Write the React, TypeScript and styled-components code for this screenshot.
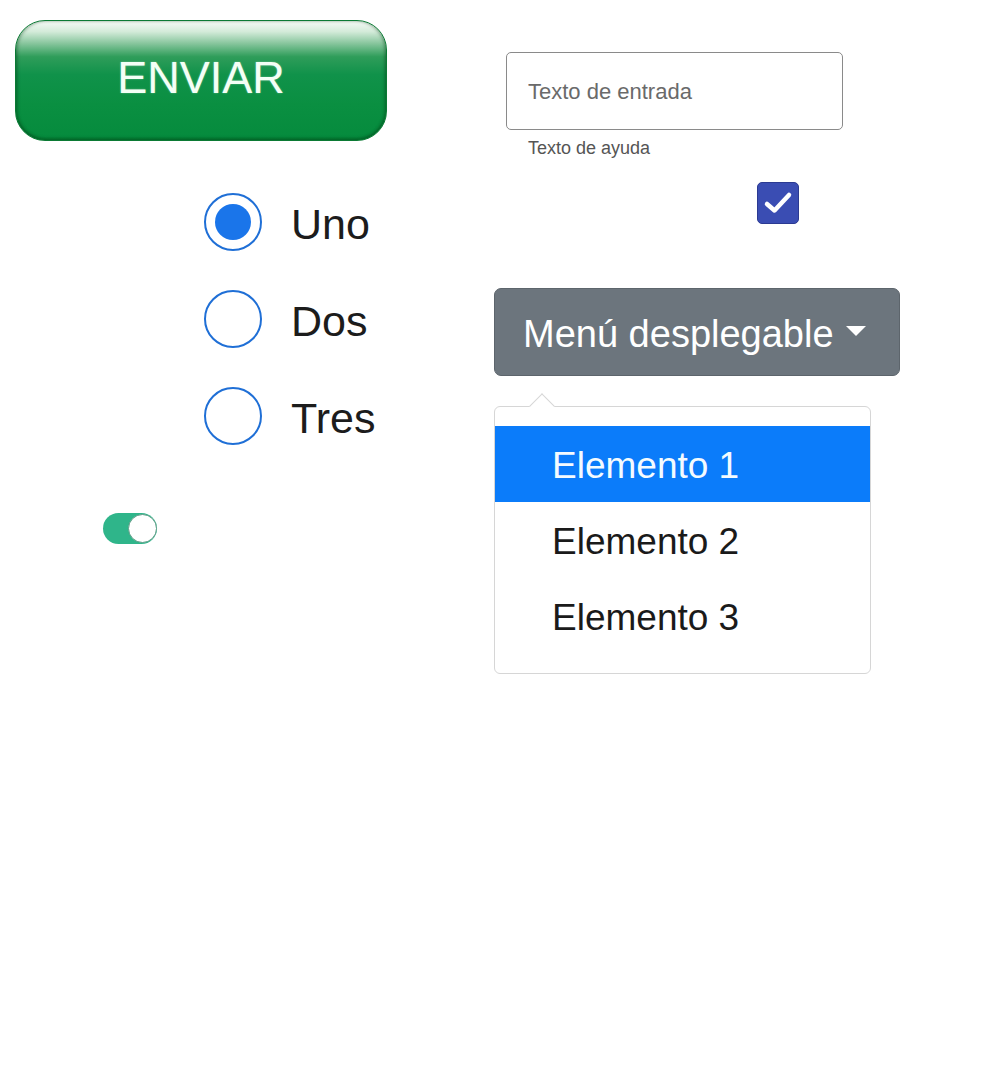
import React from "react";
import styled, { createGlobalStyle } from "styled-components";

const Global = createGlobalStyle`
  html, body { margin: 0; padding: 0; background: #ffffff; }
  body { font-family: "Liberation Sans", Arial, sans-serif; }
`;

const Page = styled.div`
  width: 1008px;
  height: 1069px;
  display: grid;
  grid-template-columns: 494px 1fr;
  background: #fff;
`;

const LeftCol = styled.div`
  display: flex;
  flex-direction: column;
  padding: 20px 0 0 15px;
`;

const RightCol = styled.div`
  display: flex;
  flex-direction: column;
  padding-top: 52px;
`;

const SendButton = styled.button`
  width: 372px;
  height: 121px;
  border-radius: 30px;
  border: 1px solid #0b7a34;
  background: linear-gradient(
    to bottom,
    #f6fbf7 0%,
    #d3ebd9 9%,
    #86c59c 19%,
    #2f9d5a 30%,
    #10924a 45%,
    #0a8f41 70%,
    #058b3d 100%
  );
  box-shadow: inset 0 -2px 3px rgba(0, 60, 20, 0.35), inset 2px 0 3px rgba(0, 60, 20, 0.25),
    inset -2px 0 3px rgba(0, 60, 20, 0.25);
  color: #f4fff6;
  font-family: "Liberation Sans", Arial, sans-serif;
  font-size: 45px;
  padding: 0 0 6px 0;
  text-shadow: 0 0 2px rgba(255, 255, 255, 0.4);
  cursor: pointer;
`;

const RadioGroup = styled.div`
  display: flex;
  flex-direction: column;
  gap: 39px;
  margin: 52px 0 0 189px;
`;

const RadioRow = styled.label`
  display: flex;
  align-items: center;
  gap: 29px;
  height: 58px;
  line-height: 58px;
  font-size: 43px;
  color: #1c1c1c;
`;

const RadioLabel = styled.span`
  position: relative;
  top: 2px;
`;

const RadioCircle = styled.span<{ $checked?: boolean }>`
  width: 58px;
  height: 58px;
  box-sizing: border-box;
  border-radius: 50%;
  border: 2px solid #1f6fd6;
  display: flex;
  align-items: center;
  justify-content: center;
  flex: none;
  &::after {
    content: "";
    width: 36px;
    height: 36px;
    border-radius: 50%;
    background: #1a75ea;
    display: ${(p) => (p.$checked ? "block" : "none")};
  }
`;

const Toggle = styled.span`
  margin: 68px 0 0 88px;
  width: 54px;
  height: 31px;
  border-radius: 16px;
  background: #2fb58a;
  display: flex;
  align-items: center;
  justify-content: flex-end;
  box-sizing: border-box;
  &::after {
    content: "";
    width: 29px;
    height: 29px;
    box-sizing: border-box;
    border-radius: 50%;
    background: #fff;
    border: 1.5px solid #5e9c86;
  }
`;

const Input = styled.input`
  margin-left: 12px;
  width: 337px;
  height: 78px;
  box-sizing: border-box;
  border: 1px solid #8a8a8a;
  border-radius: 5px;
  padding: 2px 0 0 21px;
  font-family: "Liberation Sans", Arial, sans-serif;
  font-size: 22px;
  color: #333;
  outline: none;
  &::placeholder {
    color: #6a6a6a;
  }
`;

const Helper = styled.div`
  margin: 8px 0 0 34px;
  font-size: 18px;
  color: #555;
  line-height: 20px;
`;

const CheckBox = styled.span`
  margin: 24px 0 0 263px;
  width: 42px;
  height: 42px;
  box-sizing: border-box;
  border-radius: 5px;
  background: #3a4db3;
  border: 1.5px solid #2b3a92;
  display: flex;
  align-items: center;
  justify-content: center;
`;

const DropButton = styled.button`
  margin-top: 64px;
  width: 406px;
  height: 88px;
  border-radius: 7px;
  border: 1px solid #5d656c;
  background: #6c757d;
  color: #fff;
  font-family: "Liberation Sans", Arial, sans-serif;
  font-size: 38px;
  display: flex;
  align-items: center;
  padding: 4px 0 0 28px;
  gap: 12px;
  cursor: pointer;
`;

const Caret = styled.span`
  width: 0;
  height: 0;
  border-left: 10px solid transparent;
  border-right: 10px solid transparent;
  border-top: 10px solid #fff;
  margin-top: -6px;
`;

const Menu = styled.div`
  position: relative;
  margin-top: 30px;
  width: 377px;
  box-sizing: border-box;
  border: 1.5px solid #d6d6d6;
  border-radius: 6px;
  background: #fff;
  padding: 19px 0 19px 0;
  &::before {
    content: "";
    position: absolute;
    top: -10px;
    left: 38px;
    width: 17px;
    height: 17px;
    background: #fff;
    border-left: 1.5px solid #d6d6d6;
    border-top: 1.5px solid #d6d6d6;
    transform: rotate(45deg);
  }
`;

const MenuItem = styled.div<{ $active?: boolean }>`
  height: 76px;
  display: flex;
  align-items: center;
  padding: 3px 0 0 57px;
  box-sizing: border-box;
  font-size: 37px;
  color: ${(p) => (p.$active ? "#f4fbff" : "#1a1a1a")};
  background: ${(p) => (p.$active ? "#0b7cfa" : "transparent")};
`;

export default function App() {
  return (
    <Page>
      <Global />
      <LeftCol>
        <SendButton>ENVIAR</SendButton>
        <RadioGroup>
          <RadioRow>
            <RadioCircle $checked />
            <RadioLabel>Uno</RadioLabel>
          </RadioRow>
          <RadioRow>
            <RadioCircle />
            <RadioLabel>Dos</RadioLabel>
          </RadioRow>
          <RadioRow>
            <RadioCircle />
            <RadioLabel>Tres</RadioLabel>
          </RadioRow>
        </RadioGroup>
        <Toggle />
      </LeftCol>
      <RightCol>
        <Input placeholder="Texto de entrada" />
        <Helper>Texto de ayuda</Helper>
        <CheckBox>
          <svg width="30" height="26" viewBox="0 0 30 26">
            <path
              d="M4 14 L11.5 20.5 L26 5"
              fill="none"
              stroke="#fff"
              strokeWidth="4.5"
              strokeLinecap="round"
              strokeLinejoin="round"
            />
          </svg>
        </CheckBox>
        <DropButton>
          Menú desplegable
          <Caret />
        </DropButton>
        <Menu>
          <MenuItem $active>Elemento 1</MenuItem>
          <MenuItem>Elemento 2</MenuItem>
          <MenuItem>Elemento 3</MenuItem>
        </Menu>
      </RightCol>
    </Page>
  );
}
